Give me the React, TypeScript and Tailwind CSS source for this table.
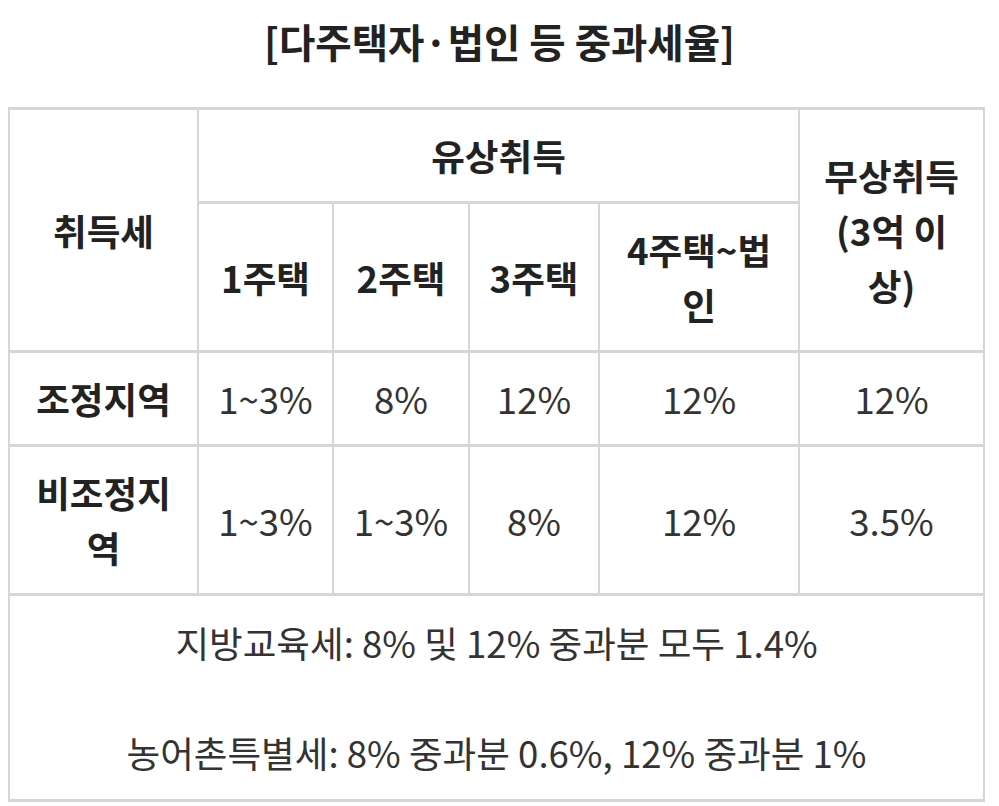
import React from "react";

const cell = "border-x-2 border-y-[3px] border-[#d6d6d6] px-[16px] py-[18px] text-center align-middle";
const head = `${cell} font-bold text-[#222]`;

export default function App() {
  return (
    <div
      className="w-[999px] min-h-[806px] bg-white text-[#333]"
      style={{ fontFamily: '"Noto Sans CJK KR", "Noto Sans", sans-serif' }}
    >
      <h2 className="pt-[13px] text-center text-[39.5px] font-bold leading-[55px] text-[#222]">
        [다주택자·법인 등 중과세율]
      </h2>
      <div className="pl-[8px] pt-[39px]">
        <table className="w-[975px] table-fixed border-collapse text-[36.6px] leading-[55px]">
          <colgroup>
            <col className="w-[189px]" />
            <col className="w-[135px]" />
            <col className="w-[136px]" />
            <col className="w-[130px]" />
            <col className="w-[200px]" />
            <col className="w-[185px]" />
          </colgroup>
          <thead>
            <tr>
              <th rowSpan={2} className={head}>취득세</th>
              <th colSpan={4} className={`${head} py-[17px]`}>유상취득</th>
              <th rowSpan={2} className={head}>무상취득 (3억 이상)</th>
            </tr>
            <tr>
              <th className={head}>1주택</th>
              <th className={head}>2주택</th>
              <th className={head}>3주택</th>
              <th className={head}>4주택~법인</th>
            </tr>
          </thead>
          <tbody>
            <tr>
              <td className={head}>조정지역</td>
              <td className={cell}>1~3%</td>
              <td className={cell}>8%</td>
              <td className={cell}>12%</td>
              <td className={cell}>12%</td>
              <td className={cell}>12%</td>
            </tr>
            <tr>
              <td className={head}>비조정지역</td>
              <td className={cell}>1~3%</td>
              <td className={cell}>1~3%</td>
              <td className={cell}>8%</td>
              <td className={cell}>12%</td>
              <td className={cell}>3.5%</td>
            </tr>
            <tr>
              <td colSpan={6} className={`${cell} py-[19px]`}>
                <p>지방교육세: 8% 및 12% 중과분 모두 1.4%</p>
                <p>&nbsp;</p>
                <p>농어촌특별세: 8% 중과분 0.6%, 12% 중과분 1%</p>
              </td>
            </tr>
          </tbody>
        </table>
      </div>
    </div>
  );
}
